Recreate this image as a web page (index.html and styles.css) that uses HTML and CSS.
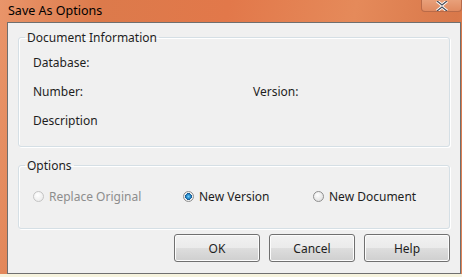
FILE: index.html
```html
<!DOCTYPE html>
<html lang="en">
<head>
    <meta charset="UTF-8">
    <title>Save As Options</title>
    <link rel="stylesheet" href="styles.css">
</head>
<body>
    <div class="window">
        <div class="titlebar">
            <span class="title">Save As Options</span>
            <span class="close">
                <svg width="14" height="10" viewBox="0 0 14 10">
                    <path d="M2 0 L7 4 L12 0 M2 10 L7 6 L12 10" stroke="#fff" stroke-width="3" fill="none"/>
                    <path d="M2 0 L7 4 L12 0 M2 10 L7 6 L12 10" stroke="#4a4f5a" stroke-width="1.3" fill="none"/>
                </svg>
            </span>
        </div>
        <div class="client">
            <fieldset class="group info">
                <legend>Document Information</legend>
                <div class="row">Database:</div>
                <div class="row split">
                    <span class="col">Number:</span>
                    <span>Version:</span>
                </div>
                <div class="row">Description</div>
            </fieldset>

            <fieldset class="group options">
                <legend>Options</legend>
                <label class="radio disabled"><span class="dot"></span>Replace Original</label>
                <label class="radio"><span class="dot on"></span>New Version</label>
                <label class="radio"><span class="dot"></span>New Document</label>
            </fieldset>

            <div class="buttons">
                <button>OK</button>
                <button>Cancel</button>
                <button>Help</button>
            </div>
        </div>
    </div>
</body>
</html>
```

FILE: styles.css
```css
body {
    margin: 0;
    background-color: #f6f3de;
    font-family: "Noto Sans", "Open Sans", sans-serif;
    font-size: 12px;
    color: #000;
}

.window {
    width: 462px;
    height: 274px;
    box-sizing: border-box;
    padding: 0 1px 0 7px;
    background: linear-gradient(100deg, #e9956a 0%, #dc7a4b 20%, #e2784a 45%, #e58a5a 70%, #d9784a 90%, #e0855a 100%);
    display: flex;
    flex-direction: column;
}

.titlebar {
    height: 22px;
    display: flex;
    justify-content: space-between;
    align-items: flex-start;
}

.title {
    margin: 2px 0 0 1px;
    color: #000;
    font-size: 12.5px;
}

.close {
    width: 41px;
    height: 12px;
    margin-right: -1px;
    border: 1px solid #b96a48;
    border-top: none;
    border-radius: 0 0 4px 4px;
    background: linear-gradient(#e8a07a, #e08a60);
    display: flex;
    justify-content: center;
    align-items: center;
    box-sizing: border-box;
}

.client {
    flex: 1;
    background-color: #f0f0f0;
    border: 1px solid #6f6f6f;
    padding: 6px 10px 0 10px;
}

.group {
    margin: 0;
    border: 1px solid #d5dfe5;
    border-radius: 3px;
    box-shadow: inset 1px 1px 0 #fff, 1px 1px 0 #fff;
    padding: 0 0 0 14px;
}

.group legend {
    padding: 0 2px;
    margin-left: -8px;
    color: #1e1e1e;
}

.info {
    height: 118px;
    box-sizing: border-box;
}

.row {
    height: 29px;
    line-height: 29px;
    color: #1e1e1e;
}

.info .row:first-of-type {
    margin-top: 2px;
}

.split {
    display: flex;
}

.col {
    width: 220px;
}

.options {
    margin-top: 10px;
    height: 72px;
    box-sizing: border-box;
    padding-bottom: 10px;
    display: flex;
    align-items: center;
}

.radio {
    display: flex;
    align-items: center;
    color: #1e1e1e;
}

.radio:nth-of-type(1) {
    width: 150px;
}

.radio:nth-of-type(2) {
    width: 130px;
}

.radio.disabled {
    color: #8d8d8d;
}

.dot {
    width: 11px;
    height: 11px;
    border-radius: 50%;
    border: 1px solid #8f8f8f;
    background: radial-gradient(circle at 40% 35%, #fff, #d8d8d8);
    box-sizing: border-box;
    margin-right: 5px;
    margin-top: 1px;
}

.disabled .dot {
    border-color: #c4c4c4;
    background: radial-gradient(circle at 40% 35%, #fff, #e6e6e6);
}

.dot.on {
    background: radial-gradient(circle, #6ad1ff 0, #1b76b8 2.6px, #1b4f80 3.4px, #f4f4f4 3.6px, #d8d8d8 100%);
}

.buttons {
    display: flex;
    justify-content: flex-end;
    gap: 9px;
    margin-top: 5px;
}

button {
    width: 86px;
    height: 28px;
    font-family: inherit;
    font-size: 12px;
    color: #1e1e1e;
    border: 1px solid #707070;
    border-radius: 3px;
    background: linear-gradient(#f2f2f2 0%, #ebebeb 48%, #dddddd 52%, #cfcfcf 100%);
    box-shadow: inset 0 0 0 1px #fcfcfc;
    padding: 0;
}
```
